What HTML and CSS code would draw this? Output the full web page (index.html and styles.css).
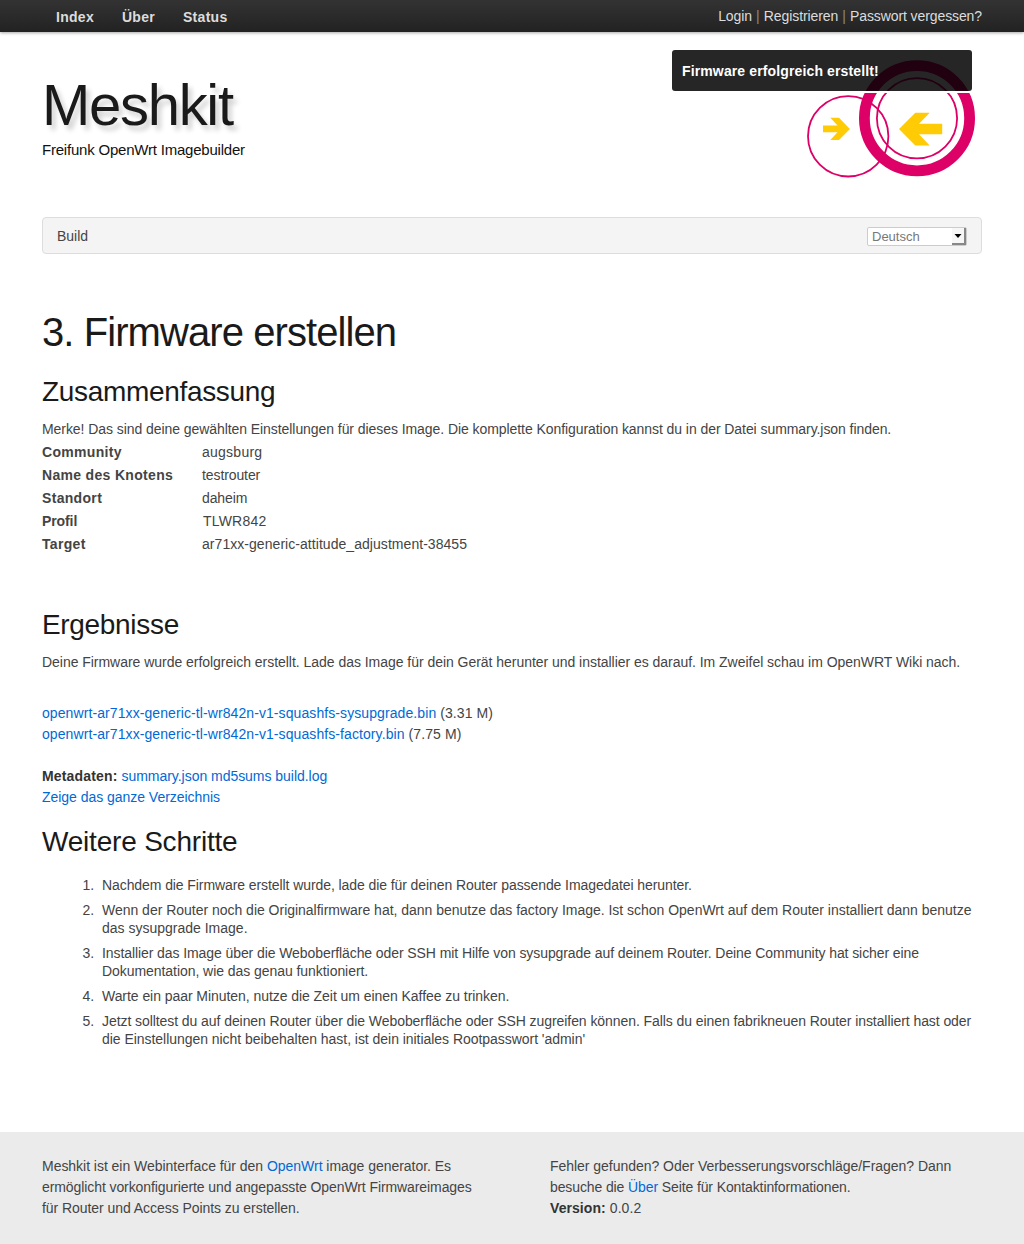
FILE: index.html
```html
<!DOCTYPE html>
<html lang="de">
<head>
<meta charset="utf-8">
<title>Meshkit</title>
<link rel="stylesheet" href="styles.css">
</head>
<body>
<nav class="topbar">
  <div class="container topbar-inner">
    <div class="topbar-menu"><a href="#">Index</a><a href="#">Über</a><a href="#">Status</a></div>
    <div class="topbar-user"><a href="#">Login</a><i>|</i><a href="#">Registrieren</a><i>|</i><a href="#">Passwort vergessen?</a></div>
  </div>
</nav>
<header class="container header">
  <div class="brand">
    <div class="brand-name">Meshkit</div>
    <div class="brand-sub">Freifunk OpenWrt Imagebuilder</div>
  </div>
  <svg class="logo" width="170" height="120" viewBox="806 59 170 120">
    <g fill="none" stroke="#dc0067">
      <circle cx="848.2" cy="136.3" r="40.2" stroke-width="1.8"/>
      <circle cx="917" cy="118.2" r="52.6" stroke-width="10.8"/>
      <circle cx="917" cy="118.2" r="40.1" stroke-width="1.8"/>
    </g>
    <g fill="#ffcb05">
      <path d="M823 125.6H837.5L830.3 117.7H839L849.9 129L839 140H830.3L837.5 132.3H823Z"/>
      <path d="M942.2 123.7H919L929.7 112.7H915.3L899 129L915.3 145.4H929.7L919 134.3H942.2Z"/>
    </g>
  </svg>
  <div class="flash">Firmware erfolgreich erstellt!</div>
</header>
<div class="container">
  <div class="statusbar">
    <a href="#">Build</a>
    <div class="select"><span>Deutsch</span><b><svg width="8" height="4" viewBox="0 0 8 4"><path d="M0.5 0H7.5L4 4Z"/></svg></b></div>
  </div>
</div>
<main class="container main">
  <h1>3. Firmware erstellen</h1>
  <h2 class="h-summary">Zusammenfassung</h2>
  <p class="note">Merke! Das sind deine gewählten Einstellungen für dieses Image. Die komplette Konfiguration kannst du in der Datei summary.json finden.</p>
  <dl class="summary">
    <dt>Community</dt><dd class="d1">augsburg</dd>
    <dt>Name des Knotens</dt><dd class="d2">testrouter</dd>
    <dt>Standort</dt><dd class="d2">daheim</dd>
    <dt class="t4">Profil</dt><dd class="d4">TLWR842</dd>
    <dt>Target</dt><dd class="d5">ar71xx-generic-attitude_adjustment-38455</dd>
  </dl>
  <h2 class="h-results">Ergebnisse</h2>
  <p class="result-text">Deine Firmware wurde erfolgreich erstellt. Lade das Image für dein Gerät herunter und installier es darauf. Im Zweifel schau im OpenWRT Wiki nach.</p>
  <div class="files">
    <div><a href="#">openwrt-ar71xx-generic-tl-wr842n-v1-squashfs-sysupgrade.bin</a> (3.31 M)</div>
    <div><a href="#">openwrt-ar71xx-generic-tl-wr842n-v1-squashfs-factory.bin</a> (7.75 M)</div>
  </div>
  <div class="meta">
    <div><strong>Metadaten:</strong> <a href="#">summary.json</a> <a href="#">md5sums</a> <a href="#">build.log</a></div>
    <div><a href="#">Zeige das ganze Verzeichnis</a></div>
  </div>
  <h2 class="h-steps">Weitere Schritte</h2>
  <ol class="steps">
    <li><span class="s1">Nachdem die Firmware erstellt wurde, lade die für deinen Router passende Imagedatei herunter.</span></li>
    <li><span class="s2">Wenn der Router noch die Originalfirmware hat, dann benutze das factory Image. Ist schon OpenWrt auf dem Router installiert dann benutze</span><br>das sysupgrade Image.</li>
    <li><span class="s1">Installier das Image über die Weboberfläche oder SSH mit Hilfe von sysupgrade auf deinem Router. Deine Community hat sicher eine</span><br><span class="s5">Dokumentation, wie das genau funktioniert.</span></li>
    <li><span class="s5">Warte ein paar Minuten, nutze die Zeit um einen Kaffee zu trinken.</span></li>
    <li><span class="s7">Jetzt solltest du auf deinen Router über die Weboberfläche oder SSH zugreifen können. Falls du einen fabrikneuen Router installiert hast oder</span><br><span class="s8">die Einstellungen nicht beibehalten hast, ist dein initiales Rootpasswort 'admin'</span></li>
  </ol>
</main>
<footer class="footer">
  <div class="container footer-inner">
    <div><span class="b1">Meshkit ist ein Webinterface für den <a href="#">OpenWrt</a> image generator. Es</span><br><span class="b2">ermöglicht vorkonfigurierte und angepasste OpenWrt Firmwareimages</span><br><span class="b3">für Router und Access Points zu erstellen.</span></div>
    <div><span class="b1">Fehler gefunden? Oder Verbesserungsvorschläge/Fragen? Dann</span><br><span class="b5">besuche die <a href="#">Über</a> Seite für Kontaktinformationen.</span><br><span class="b6"><strong>Version:</strong> 0.0.2</span></div>
  </div>
</footer>
</body>
</html>
```
FILE: styles.css
```css
* { box-sizing: border-box; margin: 0; padding: 0; }
body { background: #fff; color: #444; font: 14px/21px "Liberation Sans", Arial, sans-serif; white-space: nowrap; height: 1244px; display: flex; flex-direction: column; }
a { color: #0069d6; text-decoration: none; }
strong { color: #333; }
.container { width: 940px; margin: 0 auto; }
.topbar { height: 32px; flex: none; background: linear-gradient(#333, #222); box-shadow: 0 1px 3px rgba(0,0,0,.35); }
.topbar-inner { display: flex; justify-content: space-between; padding: 6px 0 0 14px; }
.topbar a { color: #dcdcdc; }
.topbar-menu { display: flex; gap: 28px; font-weight: bold; padding-top: 1px; letter-spacing: .28px; }
.topbar-user { display: flex; letter-spacing: -.1px; }
.topbar-user i { color: #888; font-style: normal; margin: 0 4.2px; }
.header { height: 185px; position: relative; display: flex; justify-content: space-between; padding: 43px 6px 0 0; flex: none; color: #1a1a1a; }
.brand-name { font-size: 58px; line-height: 60px; letter-spacing: -1.3px; text-shadow: 4px 5px 5px rgba(0,0,0,.18); }
.brand-sub { font-size: 15px; line-height: 20px; margin-top: 5px; color: #111; letter-spacing: -.21px; }
.logo { margin-top: -16px; }
.flash { position: absolute; left: 630px; top: 18px; width: 300px; height: 41px; border-radius: 3px; background: rgba(0,0,0,.85); color: #fff; font-weight: bold; padding: 11px 10px; letter-spacing: .13px; box-shadow: 0 2px 0 #fff; }
.statusbar { height: 37px; border: 1px solid #ddd; border-radius: 4px; background: #f4f4f4; display: flex; justify-content: space-between; align-items: center; padding: 1px 14px 0; }
.statusbar a { color: #444; margin-top: 1px; }
.select { width: 100px; height: 19px; margin-top: 1px; border: 1px solid #ccc; border-radius: 2px; background: #fff; display: flex; justify-content: space-between; color: #777; font-size: 13px; line-height: 18px; padding-left: 4px; }
.select b { width: 14px; background: #f7f7f7; border-right: 2px solid #888; border-bottom: 2px solid #888; display: flex; align-items: center; justify-content: center; }
.main { height: 878px; padding-top: 53px; flex: none; }
h1, h2 { font-weight: normal; color: #1a1a1a; }
h1 { font-size: 40px; line-height: 50px; letter-spacing: -.92px; }
h2 { font-size: 28px; line-height: 36px; letter-spacing: -.32px; }
.h-summary { margin-top: 17px; }
.note { margin-top: 9px; letter-spacing: -.066px; }
.summary { display: grid; grid-template-columns: 160px 1fr; grid-auto-rows: 23px; line-height: 23px; margin-top: 1px; }
dt { font-weight: bold; letter-spacing: .32px; }
.t4 { letter-spacing: -.1px; }
.d1 { letter-spacing: .25px; }
.d2 { letter-spacing: -.1px; }
.d4 { letter-spacing: .2px; padding-left: 1px; }
.d5 { letter-spacing: .05px; }
.h-results { margin-top: 51px; }
.result-text { margin-top: 9px; letter-spacing: -.034px; }
.files { margin-top: 30px; letter-spacing: .088px; }
.meta { margin-top: 21px; letter-spacing: -.035px; }
.meta strong { letter-spacing: .17px; }
.h-steps { margin-top: 16px; letter-spacing: -.2px; }
.steps { margin-top: 16px; padding-left: 60px; line-height: 18px; }
.steps li { margin-bottom: 7px; }
.steps li::marker { content: counter(list-item) ".\00a0\00a0"; }
.s1 { letter-spacing: -.084px; }
.s2 { letter-spacing: -.018px; }
.s5 { letter-spacing: -.055px; }
.s7 { letter-spacing: -.071px; }
.s8 { letter-spacing: -.04px; }
.footer { height: 112px; flex: none; background: #ebebeb; padding-top: 24px; }
.footer-inner { display: grid; grid-template-columns: 508px 1fr; }
.b1 { letter-spacing: -.033px; }
.b2 { letter-spacing: -.09px; }
.b3 { letter-spacing: -.055px; }
.b5 { letter-spacing: -.11px; }
.b6 { letter-spacing: .07px; }
```
